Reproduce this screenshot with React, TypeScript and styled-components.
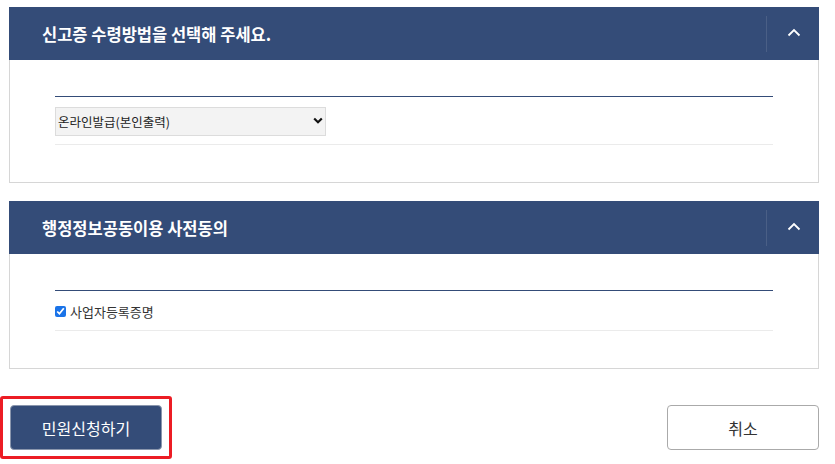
import React, { useState } from 'react';
import styled, { createGlobalStyle } from 'styled-components';

const GlobalStyle = createGlobalStyle`
    body {
        margin: 0;
        background: #fff;
        font-family: "Malgun Gothic", "Noto Sans CJK KR", "Noto Sans", sans-serif;
        color: #333;
    }
`;

const App: React.FC = () => {
    const [method, setMethod] = useState('online');
    const [agree, setAgree] = useState(true);

    return (
        <Page>
            <GlobalStyle />
            <Panel>
                <PanelHeader>
                    <h2>신고증 수령방법을 선택해 주세요.</h2>
                    <ToggleButton aria-label="접기">
                        <Chevron />
                    </ToggleButton>
                </PanelHeader>
                <PanelBody>
                    <FieldRow rowHeight={47}>
                        <Select value={method} onChange={(e) => setMethod(e.target.value)}>
                            <option value="online">온라인발급(본인출력)</option>
                            <option value="visit">방문수령</option>
                            <option value="mail">우편수령</option>
                        </Select>
                        <SelectArrow />
                    </FieldRow>
                </PanelBody>
            </Panel>

            <Panel>
                <PanelHeader>
                    <h2>행정정보공동이용 사전동의</h2>
                    <ToggleButton aria-label="접기">
                        <Chevron />
                    </ToggleButton>
                </PanelHeader>
                <PanelBody>
                    <FieldRow rowHeight={39}>
                        <CheckLabel>
                            <input
                                type="checkbox"
                                checked={agree}
                                onChange={(e) => setAgree(e.target.checked)}
                            />
                            사업자등록증명
                        </CheckLabel>
                    </FieldRow>
                </PanelBody>
            </Panel>

            <ButtonBar>
                <Highlight>
                    <Button primary>민원신청하기</Button>
                </Highlight>
                <Button>취소</Button>
            </ButtonBar>
        </Page>
    );
};

const Chevron: React.FC = () => (
    <svg width="14" height="9" viewBox="0 0 14 9" fill="none">
        <path d="M1.5 7.5 L7 2 L12.5 7.5" stroke="#fff" strokeWidth="1.8" />
    </svg>
);

const SelectArrow: React.FC = () => (
    <ArrowIcon width="10" height="7" viewBox="0 0 10 7" fill="none">
        <path d="M1.2 1.5 L5 5.2 L8.8 1.5" stroke="#111" strokeWidth="2.2" />
    </ArrowIcon>
);

// Styled Components
const Page = styled.div`
    width: 835px;
    padding: 7px 16px 0 9px;
    box-sizing: border-box;
    display: flex;
    flex-direction: column;
    gap: 18px;
`;

const Panel = styled.section`
    border: 1px solid #d6d6d6;
    border-top: none;
    background: #fff;
`;

const PanelHeader = styled.div`
    height: 53px;
    margin: 0 -1px;
    background: #344c78;
    display: flex;
    align-items: center;
    justify-content: space-between;
    padding-left: 33px;

    h2 {
        margin: 0;
        font-size: 16.5px;
        font-weight: 700;
        color: #fff;
    }
`;

const ToggleButton = styled.button`
    width: 53px;
    height: 36px;
    margin-top: 1px;
    border: none;
    border-left: 1px solid #4a5f86;
    background: transparent;
    display: flex;
    align-items: center;
    justify-content: center;
    padding: 0 0 4px 2px;
    cursor: pointer;
`;

const PanelBody = styled.div`
    padding: 36px 45px 37px;
`;

const FieldRow = styled.div<{ rowHeight: number }>`
    position: relative;
    border-top: 1px solid #344c78;
    border-bottom: 1px solid #ebebeb;
    height: ${(p) => p.rowHeight}px;
    display: flex;
    align-items: center;
`;

const Select = styled.select`
    appearance: none;
    width: 271px;
    height: 29px;
    margin-top: 1px;
    padding: 0 0 0 2px;
    border: 1px solid #dcdcdc;
    background: #f3f3f3;
    font-family: inherit;
    font-size: 12.5px;
    color: #222;
    outline: none;
`;

const ArrowIcon = styled.svg`
    position: absolute;
    left: 258px;
    top: 20px;
    pointer-events: none;
`;

const CheckLabel = styled.label`
    display: flex;
    align-items: center;
    gap: 4px;
    font-size: 13px;
    color: #333;
    margin-top: 2px;

    input {
        width: 11px;
        height: 11px;
        margin: 0;
        accent-color: #1a73e8;
    }
`;

const ButtonBar = styled.div`
    display: flex;
    justify-content: space-between;
    align-items: center;
    margin-top: 9px;
`;

const Highlight = styled.div`
    margin-left: -9px;
    padding: 6px 7px;
    border: 3px solid #ec1c24;
    border-radius: 3px;
    display: flex;
`;

const Button = styled.button<{ primary?: boolean }>`
    width: 152px;
    height: 45px;
    border-radius: 4px;
    border: 1px solid ${(p) => (p.primary ? '#8a96ad' : '#aaa')};
    background: ${(p) => (p.primary ? '#344c78' : '#fff')};
    color: ${(p) => (p.primary ? '#fff' : '#333')};
    font-family: inherit;
    font-size: 16px;
    cursor: pointer;
`;

export default App;
